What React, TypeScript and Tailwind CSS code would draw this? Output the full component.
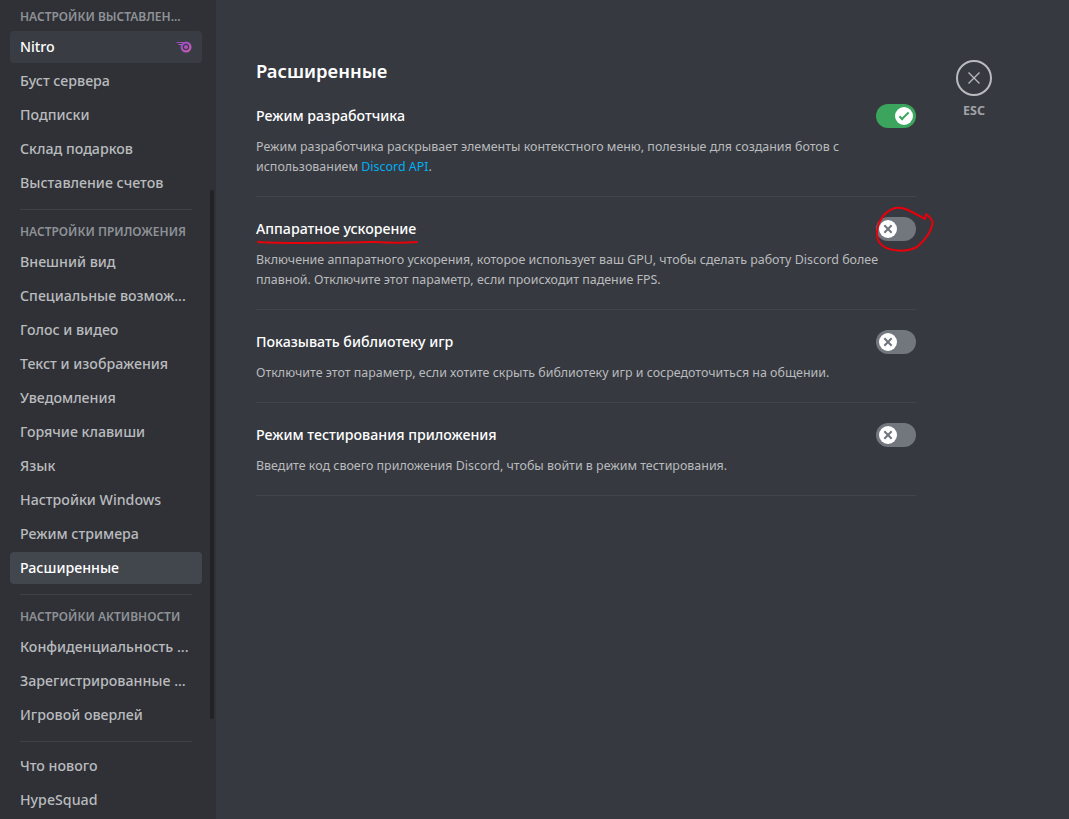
const section1 = ["Буст сервера", "Подписки", "Склад подарков", "Выставление счетов"];
const section2 = [
  "Внешний вид",
  "Специальные возмож...",
  "Голос и видео",
  "Текст и изображения",
  "Уведомления",
  "Горячие клавиши",
  "Язык",
  "Настройки Windows",
  "Режим стримера",
];
const section3 = ["Конфиденциальность ...", "Зарегистрированные ...", "Игровой оверлей"];

const NavItem = ({ label, active, hover, children }: { label: string; active?: boolean; hover?: boolean; children?: React.ReactNode }) => (
  <div
    className={`h-8 mb-[2px] ml-[10px] w-[192px] pl-[10px] pr-[10px] pb-px flex items-center justify-between rounded text-[14.2px] font-medium whitespace-nowrap ${
      active ? "bg-[#42464d] text-white" : hover ? "bg-[#393c43] text-white" : "text-[#b9bbbe]"
    }`}
  >
    <span>{label}</span>
    {children}
  </div>
);

const Header = ({ label }: { label: string }) => (
  <div className="h-[22px] mb-1 ml-5 pt-[2px] flex items-center text-[12px] font-semibold text-[#8e9297] whitespace-nowrap">
    {label}
  </div>
);

const Divider = ({ last }: { last?: boolean }) => (
  <div className={`h-px ml-5 w-[172px] mt-[10px] bg-[#3e4147] ${last ? "mb-2" : "mb-[10px]"}`} />
);

const Toggle = ({ on }: { on?: boolean }) => (
  <div className={`relative w-10 h-6 shrink-0 rounded-full ${on ? "bg-[#3ba55d]" : "bg-[#72767d]"}`}>
    <div className={`absolute top-[3px] w-[18px] h-[18px] rounded-full bg-white flex items-center justify-center ${on ? "left-[19px]" : "left-[3px]"}`}>
      {on ? (
        <svg width="18" height="18" viewBox="0 0 20 20">
          <path d="M7.89561 14.8538L6.30462 13.2629L14.3099 5.25755L15.9009 6.84854L7.89561 14.8538Z" fill="#3ba55d" />
          <path d="M4.08643 11.0903L5.67742 9.49929L9.4485 13.2704L7.85751 14.8614L4.08643 11.0903Z" fill="#3ba55d" />
        </svg>
      ) : (
        <svg width="18" height="18" viewBox="0 0 20 20">
          <path d="M5.13231 6.72963L6.7233 5.13864L14.855 13.2704L13.264 14.8614L5.13231 6.72963Z" fill="#72767d" />
          <path d="M13.2704 5.13864L14.8614 6.72963L6.72963 14.8614L5.13864 13.2704L13.2704 5.13864Z" fill="#72767d" />
        </svg>
      )}
    </div>
  </div>
);

const Row = ({ title, on, tall, children }: { title: string; on?: boolean; tall?: boolean; children: React.ReactNode }) => (
  <div className={`mb-[20px] border-b border-[#42454b] ${tall ? "pb-[18.5px]" : "pb-[18.75px]"}`}>
    <div className="flex justify-between items-center h-6 mb-[9px]">
      <div className="text-[14.2px] font-medium text-white pb-px">{title}</div>
      <Toggle on={on} />
    </div>
    <div className="text-[12.45px] leading-[20.25px] text-[#b9bbbe]">{children}</div>
  </div>
);

export default function App() {
  return (
    <div className="relative flex h-[819px] w-[1069px] overflow-hidden bg-[#36393f] font-['Noto_Sans','Open_Sans',sans-serif]">
      <aside className="relative w-[216px] shrink-0 bg-[#2f3136] pt-[5px]">
        <Header label="НАСТРОЙКИ ВЫСТАВЛЕН..." />
        <NavItem label="Nitro" hover>
          <svg width="16" height="12" viewBox="0 0 16 12">
            <defs>
              <linearGradient id="nitro" x1="0" y1="0" x2="1" y2="1">
                <stop offset="0" stopColor="#8547c6" />
                <stop offset="1" stopColor="#d65fb0" />
              </linearGradient>
            </defs>
            <circle cx="10" cy="6" r="5.5" fill="url(#nitro)" />
            <circle cx="10" cy="6" r="2.6" fill="none" stroke="#393c43" strokeWidth="1.2" />
            <path d="M0.5 1.5h7M2.5 3.5h3" stroke="url(#nitro)" strokeWidth="1" />
          </svg>
        </NavItem>
        {section1.map((label) => (
          <NavItem key={label} label={label} />
        ))}
        <Divider />
        <Header label="НАСТРОЙКИ ПРИЛОЖЕНИЯ" />
        {section2.map((label) => (
          <NavItem key={label} label={label} />
        ))}
        <NavItem label="Расширенные" active />
        <Divider />
        <Header label="НАСТРОЙКИ АКТИВНОСТИ" />
        {section3.map((label) => (
          <NavItem key={label} label={label} />
        ))}
        <Divider last />
        <NavItem label="Что нового" />
        <NavItem label="HypeSquad" />
        <div className="absolute left-[210px] top-[190px] h-[529px] w-[4px] rounded-full bg-[#202225]" />
      </aside>

      <main className="flex-1 pl-10 pt-[60px]">
        <div className="flex">
          <div className="w-[660px]">
            <h2 className="text-[18.4px] leading-[22px] font-semibold text-white mb-[20px] h-6">Расширенные</h2>
            <Row title="Режим разработчика" on tall>
              Режим разработчика раскрывает элементы контекстного меню, полезные для создания ботов с использованием{" "}
              <span className="text-[#00aff4]">Discord API</span>.
            </Row>
            <Row title="Аппаратное ускорение" tall>
              Включение аппаратного ускорения, которое использует ваш GPU, чтобы сделать работу Discord более плавной. Отключите этот параметр, если происходит падение FPS.
            </Row>
            <Row title="Показывать библиотеку игр">
              Отключите этот параметр, если хотите скрыть библиотеку игр и сосредоточиться на общении.
            </Row>
            <Row title="Режим тестирования приложения">
              Введите код своего приложения Discord, чтобы войти в режим тестирования.
            </Row>
          </div>
          <div className="ml-10 flex flex-col items-center">
            <div className="w-9 h-9 rounded-full border-2 border-[#b9bbbe] flex items-center justify-center">
              <svg width="18" height="18" viewBox="0 0 18 18">
                <path d="M3.5 3.5L14.5 14.5M14.5 3.5L3.5 14.5" stroke="#b9bbbe" strokeWidth="1.3" />
              </svg>
            </div>
            <div className="mt-[7px] text-[12.5px] leading-4 font-bold text-[#a0a3a7]">ESC</div>
          </div>
        </div>
      </main>

      <svg className="absolute inset-0 pointer-events-none" width="1069" height="819" fill="none" stroke="#e8000a" strokeWidth="2" strokeLinecap="round" strokeLinejoin="round">
        <path d="M258 242C290 244 330 243 375 242C390 243 405 243 417 242" />
        <path d="M926 214C930 217 933 220 932.5 224C931 232 924 241 917 247C911 250 904 251 898 250.5C890 250 883 248 879 242C876 236 877 228 879 223C882 216 888 210 895 208C900 207 904 208 908 210C914 213 920 216 925 219L926 214" />
      </svg>
    </div>
  );
}
